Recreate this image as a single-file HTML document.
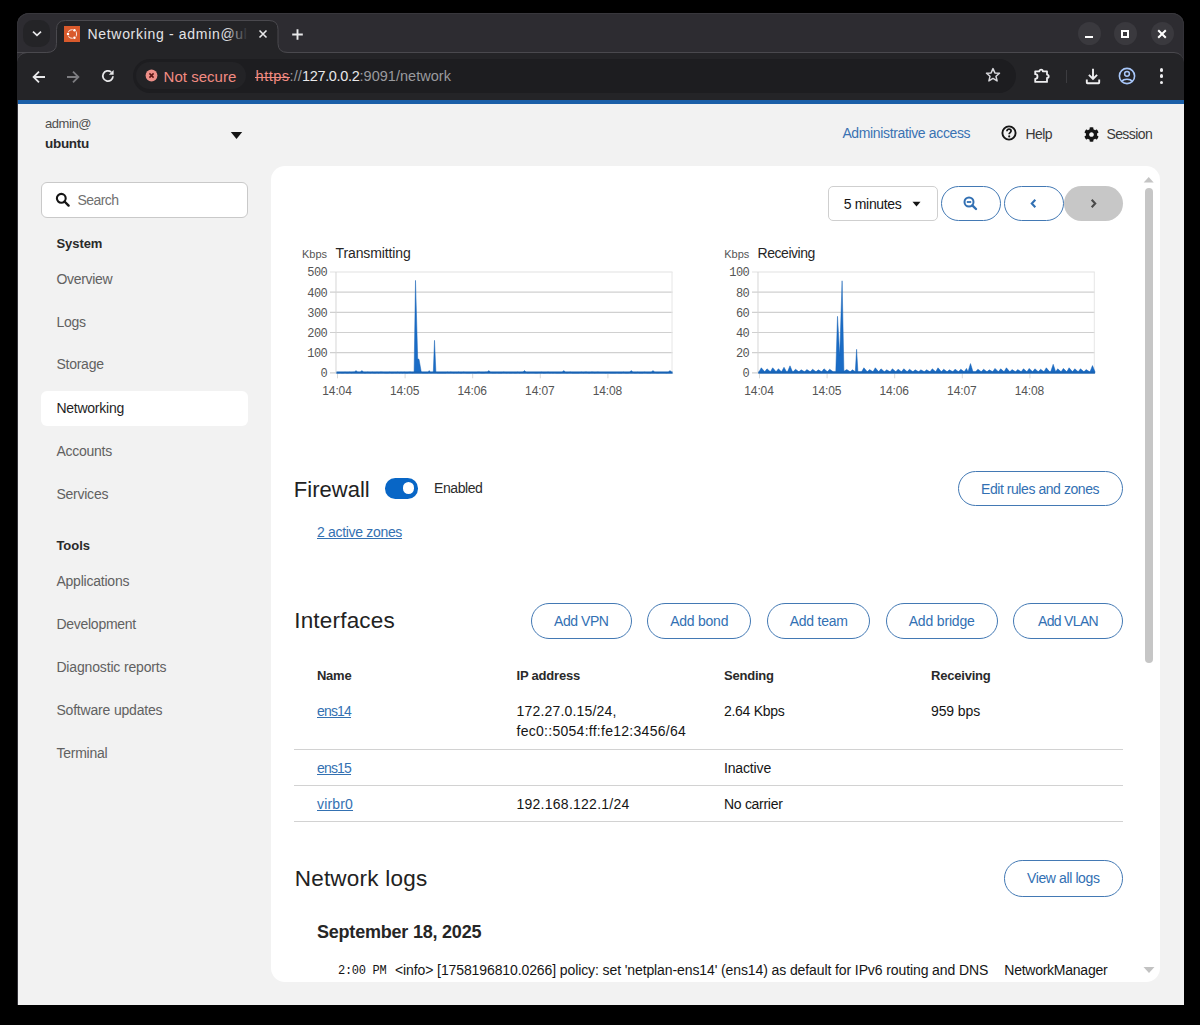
<!DOCTYPE html>
<html><head><meta charset="utf-8">
<style>
*{box-sizing:border-box;margin:0;padding:0}
html,body{width:1200px;height:1025px;overflow:hidden;background:#000;font-family:"Liberation Sans",sans-serif}
.b{position:absolute}
.t{position:absolute;white-space:nowrap;line-height:1}
</style></head><body>
<div class="b" style="left:17px;top:13px;width:1167px;height:992px;background:#2d2c31;border-radius:12px 12px 0 0;box-shadow:inset 0 1px 0 #38373c,inset 1px 0 0 #333238,inset -1px 0 0 #333238"></div>
<div class="b" style="left:17px;top:52px;width:1167px;height:48px;background:#242427;border-top:1px solid #4a494e;border-radius:10px 10px 0 0"></div>
<svg class="b" style="left:17px;top:13px" width="300" height="44" viewBox="0 0 300 44"><path d="M29.5 39.5 Q39.5 39.5 39.5 30.5 L39.5 16.5 Q39.5 7.5 48.5 7.5 L252 7.5 Q261 7.5 261 16.5 L261 30.5 Q261 39.5 271 39.5 L271 44 L29.5 44Z" fill="#242427"/><path d="M0 39.5 L29.5 39.5 Q39.5 39.5 39.5 30.5 L39.5 16.5 Q39.5 7.5 48.5 7.5 L252 7.5 Q261 7.5 261 16.5 L261 30.5 Q261 39.5 271 39.5 L300 39.5" fill="none" stroke="#4a494e" stroke-width="1"/></svg>
<div class="b" style="left:23px;top:20px;width:27px;height:27px;background:#242427;border-radius:10px"></div>
<svg class="b" style="left:31px;top:29px" width="12" height="9" viewBox="0 0 12 9"><path d="M2 2.6 L6 6.4 L10 2.6" fill="none" stroke="#e8e8ea" stroke-width="1.7"/></svg>
<svg class="b" style="left:64px;top:26px" width="16" height="16" viewBox="0 0 16 16"><rect width="16" height="16" fill="#d95a2c"/><circle cx="8.3" cy="8" r="4.3" fill="none" stroke="#f6e3dc" stroke-width="1.05"/><circle cx="4" cy="8" r="1.9" fill="#d95a2c"/><circle cx="10.45" cy="4.3" r="1.9" fill="#d95a2c"/><circle cx="10.45" cy="11.7" r="1.9" fill="#d95a2c"/><circle cx="4" cy="8" r="1.25" fill="#fff"/><circle cx="10.45" cy="4.3" r="1.25" fill="#fff"/><circle cx="10.45" cy="11.7" r="1.25" fill="#fff"/></svg>
<div class="t" style="left:87.50px;top:27.15px;font-size:14px;color:#e3e3e6;font-family:'Liberation Sans',sans-serif;letter-spacing:0.683px;">Networking - admin@ul</div>
<div class="b" style="left:226px;top:24px;width:26px;height:22px;background:linear-gradient(90deg,rgba(36,36,39,0),#242427 85%)"></div>
<svg class="b" style="left:258px;top:29px" width="10" height="10" viewBox="0 0 10 10"><path d="M1.5 1.5L8.5 8.5M8.5 1.5L1.5 8.5" stroke="#e8e8ea" stroke-width="1.6"/></svg>
<svg class="b" style="left:291px;top:28px" width="13" height="13" viewBox="0 0 13 13"><path d="M6.5 1.2V11.8M1.2 6.5H11.8" stroke="#e8e8ea" stroke-width="1.9"/></svg>
<div class="b" style="left:1078.0px;top:22px;width:23px;height:23px;border-radius:50%;background:#3a393e"></div>
<div class="b" style="left:1114.0px;top:22px;width:23px;height:23px;border-radius:50%;background:#3a393e"></div>
<div class="b" style="left:1150.5px;top:22px;width:23px;height:23px;border-radius:50%;background:#3a393e"></div>
<div class="b" style="left:1085px;top:36px;width:8px;height:2.3px;background:#fff"></div>
<div class="b" style="left:1121px;top:30.3px;width:8px;height:8px;border:2px solid #fff"></div>
<svg class="b" style="left:1157px;top:29px" width="10" height="10" viewBox="0 0 10 10"><path d="M1.2 1.2L8.8 8.8M8.8 1.2L1.2 8.8" stroke="#fff" stroke-width="2"/></svg>
<svg class="b" style="left:31px;top:69px" width="16" height="16" viewBox="0 0 16 16"><path d="M14 8H3M8 2.6L2.6 8L8 13.4" fill="none" stroke="#e8e8ea" stroke-width="1.8"/></svg>
<svg class="b" style="left:65px;top:69px" width="16" height="16" viewBox="0 0 16 16"><path d="M2 8H13M8 2.6L13.4 8L8 13.4" fill="none" stroke="#7c7c80" stroke-width="1.8"/></svg>
<svg class="b" style="left:100px;top:68px" width="16" height="16" viewBox="0 0 16 16"><path d="M13 8.3A5.1 5.1 0 1 1 11.2 4.1" fill="none" stroke="#e8e8ea" stroke-width="1.8"/><path d="M13.6 2V6.8H8.8Z" fill="#e8e8ea"/></svg>
<div class="b" style="left:133px;top:59px;width:883px;height:34px;background:#1d1d20;border-radius:17px"></div>
<div class="b" style="left:136px;top:62px;width:110px;height:27px;background:#232326;border-radius:14px"></div>
<svg class="b" style="left:144.6px;top:68.9px" width="13" height="13" viewBox="0 0 13 13"><circle cx="6.5" cy="6.5" r="5.9" fill="#ee8f88"/><path d="M4.4 4.4L8.6 8.6M8.6 4.4L4.4 8.6" stroke="#5a1614" stroke-width="1.5"/></svg>
<div class="t" style="left:163.60px;top:68.80px;font-size:15px;color:#f28b82;font-family:'Liberation Sans',sans-serif;letter-spacing:0.025px;">Not secure</div>
<div class="t" style="left:255.60px;top:68.73px;font-size:14.5px;color:#f28b82;font-family:'Liberation Sans',sans-serif;letter-spacing:0.512px;">https</div>
<div class="b" style="left:255px;top:76.6px;width:35px;height:1.3000000000000114px;background:#f28b82"></div>
<div class="t" style="left:289.60px;top:68.73px;font-size:14.5px;color:#9a9a9e;font-family:'Liberation Sans',sans-serif;letter-spacing:0.102px;">://</div>
<div class="t" style="left:302.00px;top:68.73px;font-size:14.5px;color:#e8e8ea;font-family:'Liberation Sans',sans-serif;letter-spacing:-0.341px;">127.0.0.2</div>
<div class="t" style="left:359.50px;top:68.73px;font-size:14.5px;color:#9a9a9e;font-family:'Liberation Sans',sans-serif;letter-spacing:0.032px;">:9091/network</div>
<svg class="b" style="left:985px;top:67px" width="16" height="16" viewBox="0 0 16 16"><path d="M8 1.6L9.9 5.9L14.5 6.3L11 9.3L12.1 13.9L8 11.4L3.9 13.9L5 9.3L1.5 6.3L6.1 5.9Z" fill="none" stroke="#d8d8dc" stroke-width="1.5" stroke-linejoin="round"/></svg>
<svg class="b" style="left:1033px;top:67px" width="18" height="18" viewBox="0 0 18 18"><path d="M2.2 4.3H6.4A1.7 1.7 0 0 1 9.8 4.3H14V7.6A1.7 1.7 0 0 1 14 11V14.9H2.2V11.8A2.3 2.3 0 0 0 2.2 7.2Z" fill="none" stroke="#eeeef0" stroke-width="1.8" stroke-linejoin="round"/></svg>
<div class="b" style="left:1066px;top:70px;width:1px;height:13px;background:#3c3c40"></div>
<svg class="b" style="left:1084px;top:67px" width="18" height="18" viewBox="0 0 18 18"><path d="M9 1.8V12M4.9 7.9L9 12L13.1 7.9M2.8 12.6V15.6Q2.8 16.2 3.4 16.2H14.6Q15.2 16.2 15.2 15.6V12.6" fill="none" stroke="#eeeef0" stroke-width="1.9"/></svg>
<svg class="b" style="left:1118px;top:67px" width="18" height="18" viewBox="0 0 18 18"><circle cx="9" cy="9" r="7.6" fill="none" stroke="#a8c7fa" stroke-width="1.6"/><circle cx="9" cy="6.8" r="2.4" fill="none" stroke="#a8c7fa" stroke-width="1.5"/><path d="M4.2 14.2C5.5 11.6 12.5 11.6 13.8 14.2" fill="none" stroke="#a8c7fa" stroke-width="1.5"/></svg>
<div class="b" style="left:1159.7px;top:68.0px;width:3.6px;height:3.6px;border-radius:50%;background:#eeeef0"></div>
<div class="b" style="left:1159.7px;top:74.4px;width:3.6px;height:3.6px;border-radius:50%;background:#eeeef0"></div>
<div class="b" style="left:1159.7px;top:80.60000000000001px;width:3.6px;height:3.6px;border-radius:50%;background:#eeeef0"></div>
<div class="b" style="left:18px;top:100px;width:1166px;height:4px;background:#1b5fa8"></div>
<div class="b" style="left:18px;top:104px;width:1166px;height:901px;background:#f2f2f2"></div>
<div class="t" style="left:45.00px;top:117.00px;font-size:13px;color:#4f4f4f;font-family:'Liberation Sans',sans-serif;letter-spacing:-0.438px;">admin@</div>
<div class="t" style="left:45.00px;top:136.57px;font-size:13.5px;color:#2a2a2a;font-family:'Liberation Sans',sans-serif;font-weight:bold;letter-spacing:-0.292px;">ubuntu</div>
<svg class="b" style="left:230px;top:131px" width="13" height="9" viewBox="0 0 13 9"><path d="M0.8 1H12.2L6.5 8Z" fill="#151515"/></svg>
<div class="b" style="left:41px;top:182px;width:207px;height:36px;background:#fff;border:1px solid #c9c9c9;border-radius:6px"></div>
<svg class="b" style="left:55px;top:192px" width="16" height="16" viewBox="0 0 16 16"><circle cx="6.3" cy="6.3" r="4.4" fill="none" stroke="#151515" stroke-width="2.1"/><path d="M9.5 9.5L13.6 13.6" stroke="#151515" stroke-width="2.4" stroke-linecap="round"/></svg>
<div class="t" style="left:77.40px;top:192.55px;font-size:14px;color:#707070;font-family:'Liberation Sans',sans-serif;letter-spacing:-0.557px;">Search</div>
<div class="t" style="left:56.40px;top:237.40px;font-size:13px;color:#2a2a2a;font-family:'Liberation Sans',sans-serif;font-weight:bold;letter-spacing:-0.044px;">System</div>
<div class="b" style="left:41px;top:391px;width:207px;height:35px;background:#fff;border-radius:6px"></div>
<div class="t" style="left:56.40px;top:271.85px;font-size:14px;color:#616161;font-family:'Liberation Sans',sans-serif;letter-spacing:-0.291px;">Overview</div>
<div class="t" style="left:56.40px;top:314.55px;font-size:14px;color:#616161;font-family:'Liberation Sans',sans-serif;letter-spacing:-0.266px;">Logs</div>
<div class="t" style="left:56.40px;top:357.45px;font-size:14px;color:#616161;font-family:'Liberation Sans',sans-serif;letter-spacing:-0.245px;">Storage</div>
<div class="t" style="left:56.40px;top:401.15px;font-size:14px;color:#1f1f1f;font-family:'Liberation Sans',sans-serif;letter-spacing:-0.245px;">Networking</div>
<div class="t" style="left:56.40px;top:444.15px;font-size:14px;color:#616161;font-family:'Liberation Sans',sans-serif;letter-spacing:-0.252px;">Accounts</div>
<div class="t" style="left:56.40px;top:487.15px;font-size:14px;color:#616161;font-family:'Liberation Sans',sans-serif;letter-spacing:-0.235px;">Services</div>
<div class="t" style="left:56.40px;top:574.15px;font-size:14px;color:#616161;font-family:'Liberation Sans',sans-serif;letter-spacing:-0.220px;">Applications</div>
<div class="t" style="left:56.40px;top:617.15px;font-size:14px;color:#616161;font-family:'Liberation Sans',sans-serif;letter-spacing:-0.262px;">Development</div>
<div class="t" style="left:56.40px;top:660.15px;font-size:14px;color:#616161;font-family:'Liberation Sans',sans-serif;letter-spacing:-0.155px;">Diagnostic reports</div>
<div class="t" style="left:56.40px;top:703.15px;font-size:14px;color:#616161;font-family:'Liberation Sans',sans-serif;letter-spacing:-0.183px;">Software updates</div>
<div class="t" style="left:56.40px;top:746.15px;font-size:14px;color:#616161;font-family:'Liberation Sans',sans-serif;letter-spacing:-0.231px;">Terminal</div>
<div class="t" style="left:56.40px;top:539.00px;font-size:13px;color:#2a2a2a;font-family:'Liberation Sans',sans-serif;font-weight:bold;letter-spacing:-0.037px;">Tools</div>
<div class="t" style="left:842.40px;top:126.15px;font-size:14px;color:#3a72b2;font-family:'Liberation Sans',sans-serif;letter-spacing:-0.359px;">Administrative access</div>
<svg class="b" style="left:1001px;top:124.5px" width="16" height="16" viewBox="0 0 16 16"><circle cx="8" cy="8" r="6.6" fill="none" stroke="#151515" stroke-width="1.9"/><path d="M5.9 6.3C5.9 4.9 6.9 4.2 8 4.2C9.2 4.2 10.1 5 10.1 6.1C10.1 7.4 8.6 7.6 8.3 8.6V9.2" fill="none" stroke="#151515" stroke-width="1.7"/><circle cx="8.2" cy="11.4" r="1.05" fill="#151515"/></svg>
<div class="t" style="left:1025.40px;top:126.75px;font-size:14px;color:#3a3a3a;font-family:'Liberation Sans',sans-serif;letter-spacing:-0.545px;">Help</div>
<svg class="b" style="left:1083.5px;top:126.5px" width="15" height="15" viewBox="0 0 512 512"><path fill="#151515" d="M487.4 315.7l-42.6-24.6c4.3-23.2 4.3-47 0-70.2l42.6-24.6c4.9-2.8 7.1-8.6 5.5-14-11.1-35.6-30-67.8-54.7-94.6-3.8-4.1-10-5.1-14.8-2.3L380.8 110c-17.9-15.4-38.5-27.3-60.8-35.1V25.8c0-5.6-3.9-10.5-9.4-11.7-36.7-8.2-74.3-7.8-109.2 0-5.5 1.2-9.4 6.1-9.4 11.7V75c-22.2 7.9-42.8 19.8-60.8 35.1L88.7 85.5c-4.9-2.8-11-1.9-14.8 2.3-24.7 26.7-43.6 58.9-54.7 94.6-1.7 5.4.6 11.2 5.5 14L67.3 221c-4.3 23.2-4.3 47 0 70.2l-42.6 24.6c-4.9 2.8-7.1 8.6-5.5 14 11.1 35.6 30 67.8 54.7 94.6 3.8 4.1 10 5.1 14.8 2.3l42.6-24.6c17.9 15.4 38.5 27.3 60.8 35.1v49.2c0 5.6 3.9 10.5 9.4 11.7 36.7 8.2 74.3 7.8 109.2 0 5.5-1.2 9.4-6.1 9.4-11.7v-49.2c22.2-7.9 42.8-19.8 60.8-35.1l42.6 24.6c4.9 2.8 11 1.9 14.8-2.3 24.7-26.7 43.6-58.9 54.7-94.6 1.5-5.5-.7-11.3-5.6-14.1zM256 336c-44.1 0-80-35.9-80-80s35.9-80 80-80 80 35.9 80 80-35.9 80-80 80z"/></svg>
<div class="t" style="left:1106.40px;top:126.75px;font-size:14px;color:#3a3a3a;font-family:'Liberation Sans',sans-serif;letter-spacing:-0.571px;">Session</div>
<div class="b" style="left:271px;top:166px;width:889px;height:816px;background:#fff;border-radius:14px"></div>
<div class="b" style="left:828px;top:186px;width:110px;height:35px;border:1px solid #cfcfcf;border-radius:5px;background:#fff"></div>
<div class="t" style="left:843.80px;top:196.55px;font-size:14px;color:#151515;font-family:'Liberation Sans',sans-serif;letter-spacing:-0.341px;">5 minutes</div>
<svg class="b" style="left:912px;top:201px" width="9" height="6" viewBox="0 0 9 6"><path d="M0.5 0.8H8.5L4.5 5.5Z" fill="#151515"/></svg>
<div class="b" style="left:941px;top:186px;width:60px;height:35px;border:1px solid #4379b4;border-radius:17.5px;background:#fff"></div>
<svg class="b" style="left:963px;top:196px" width="15" height="15" viewBox="0 0 15 15"><circle cx="6" cy="6" r="4.5" fill="none" stroke="#3270b3" stroke-width="2"/><path d="M3.8 6H8.2" stroke="#3270b3" stroke-width="1.8"/><path d="M9.3 9.3L13 13" stroke="#3270b3" stroke-width="2.4" stroke-linecap="round"/></svg>
<div class="b" style="left:1004px;top:186px;width:60px;height:35px;border:1px solid #4379b4;border-radius:17.5px;background:#fff"></div>
<svg class="b" style="left:1029px;top:198px" width="9" height="11" viewBox="0 0 9 11"><path d="M6.3 1.8L2.8 5.5L6.3 9.2" fill="none" stroke="#3270b3" stroke-width="2.1"/></svg>
<div class="b" style="left:1064px;top:186px;width:59px;height:35px;background:#c7c7c7;border-radius:17.5px"></div>
<svg class="b" style="left:1089px;top:198px" width="9" height="11" viewBox="0 0 9 11"><path d="M2.7 1.8L6.2 5.5L2.7 9.2" fill="none" stroke="#4a4a4a" stroke-width="2.1"/></svg>
<div class="t" style="left:302.00px;top:248.69px;font-size:11px;color:#555555;font-family:'Liberation Sans',sans-serif;letter-spacing:-0.023px;">Kbps</div>
<div class="t" style="left:335.60px;top:246.45px;font-size:14px;color:#262626;font-family:'Liberation Sans',sans-serif;letter-spacing:-0.122px;">Transmitting</div>
<svg class="b" style="left:295.5px;top:266.5px" width="386.5" height="140.8" viewBox="295.5 266.5 386.5 140.8"><line x1="329.5" y1="271.5" x2="672" y2="271.5" stroke="#e2e2e2" stroke-width="1.2"/><line x1="329.5" y1="291.7" x2="672" y2="291.7" stroke="#d0d0d0" stroke-width="1.2"/><line x1="329.5" y1="311.8" x2="672" y2="311.8" stroke="#d0d0d0" stroke-width="1.2"/><line x1="329.5" y1="332.0" x2="672" y2="332.0" stroke="#d0d0d0" stroke-width="1.2"/><line x1="329.5" y1="352.1" x2="672" y2="352.1" stroke="#d0d0d0" stroke-width="1.2"/><line x1="329.5" y1="372.3" x2="672" y2="372.3" stroke="#d0d0d0" stroke-width="1.2"/><line x1="335.5" y1="271.5" x2="335.5" y2="372.3" stroke="#d6d6d6" stroke-width="1"/><line x1="671.5" y1="271.5" x2="671.5" y2="372.3" stroke="#e6e6e6" stroke-width="1"/><line x1="337.0" y1="372.3" x2="337.0" y2="377.8" stroke="#d8d8d8" stroke-width="1"/><line x1="404.6" y1="372.3" x2="404.6" y2="377.8" stroke="#d8d8d8" stroke-width="1"/><line x1="472.2" y1="372.3" x2="472.2" y2="377.8" stroke="#d8d8d8" stroke-width="1"/><line x1="539.8" y1="372.3" x2="539.8" y2="377.8" stroke="#d8d8d8" stroke-width="1"/><line x1="607.4" y1="372.3" x2="607.4" y2="377.8" stroke="#d8d8d8" stroke-width="1"/><polygon points="336.0,372.8 336.5,372.3 338.1,372.3 339.7,372.0 341.3,372.3 342.9,372.3 344.5,371.7 346.1,372.3 347.7,372.3 349.3,371.7 350.9,372.3 352.5,371.7 354.0,371.8 355.5,370.0 357.0,371.8 358.9,372.0 359.9,371.8 361.4,370.0 362.9,371.8 363.7,372.3 365.3,372.3 366.9,371.7 368.5,372.0 370.1,372.3 371.7,371.7 373.3,372.3 374.9,372.3 376.5,371.7 378.1,372.3 379.7,371.7 381.3,371.7 382.9,372.0 384.5,372.3 386.1,372.3 387.7,372.3 389.3,371.7 390.9,372.3 392.5,372.3 394.1,372.0 395.7,372.3 397.3,371.7 398.9,372.3 400.5,371.7 402.1,372.3 403.7,371.7 405.3,372.3 406.9,372.3 408.5,371.7 410.1,371.7 411.7,372.3 413.6,371.8 415.0,279.9 417.2,358.3 418.5,358.8 420.8,371.8 422.0,372.3 427.5,372.3 428.7,370.1 430.0,372.3 432.8,371.8 434.0,339.8 435.4,371.8 437.0,372.3 437.3,372.3 438.9,372.3 440.5,372.3 442.1,372.3 443.7,372.3 445.3,372.3 446.9,371.7 448.5,372.3 450.1,371.7 451.7,372.0 453.3,372.3 454.9,372.0 456.5,372.3 458.1,371.7 459.7,372.3 461.3,372.3 462.9,371.7 464.5,372.0 466.1,372.3 467.7,372.3 469.3,372.3 470.9,372.0 472.5,372.0 474.1,372.3 475.7,372.3 477.3,371.7 478.9,371.7 480.5,372.3 482.1,372.3 483.7,372.3 485.3,371.7 486.8,371.8 488.3,370.0 489.8,371.8 491.7,372.3 493.3,372.3 494.9,372.3 496.5,372.0 498.1,372.3 499.7,372.3 501.3,372.3 502.9,371.7 504.5,372.0 506.1,372.3 507.7,372.0 509.3,372.3 510.9,372.3 512.5,372.0 514.1,372.3 515.7,372.3 517.3,371.7 518.9,372.3 520.5,372.0 522.5,371.8 524.0,370.0 525.5,371.8 526.9,372.3 528.5,372.3 530.1,372.0 531.7,372.0 533.3,372.0 534.9,372.3 536.5,372.3 538.1,372.0 539.7,372.0 541.3,371.7 542.9,372.3 544.5,372.3 546.1,372.0 547.7,371.7 549.3,372.3 550.9,372.0 552.5,372.3 554.1,372.0 555.7,372.3 557.3,372.3 558.9,372.3 560.5,372.3 561.8,371.8 563.3,370.0 564.8,371.8 565.3,372.3 566.9,372.3 568.5,372.0 570.1,371.7 571.7,372.3 573.3,372.3 574.9,372.3 576.5,372.3 578.1,372.3 579.7,372.0 581.3,371.7 582.9,372.3 584.5,371.7 586.1,371.7 587.7,372.3 589.3,372.3 590.9,371.7 592.5,371.7 594.1,372.3 595.7,372.0 597.3,371.7 598.9,372.0 600.5,372.0 602.1,372.0 603.7,372.0 605.3,372.3 606.9,372.0 608.5,372.0 610.1,372.3 611.7,372.3 613.3,372.3 614.9,372.3 616.5,372.0 618.1,372.3 619.7,372.3 621.3,372.3 622.9,371.7 624.5,372.3 626.1,372.3 627.7,372.3 629.3,371.8 630.8,370.0 632.3,371.8 634.1,372.3 635.7,372.3 637.3,371.7 638.9,372.3 640.5,372.3 642.1,372.3 643.7,371.7 645.3,372.0 646.9,372.3 648.5,372.3 650.1,372.3 651.0,371.8 652.5,370.0 654.0,371.8 654.9,372.0 656.5,372.3 658.1,372.3 659.7,372.0 661.3,372.0 662.9,372.0 664.5,372.0 666.1,372.3 668.0,371.8 669.5,370.0 671.0,371.8 672,372.8" fill="#1a6cc6" stroke="#1762b4" stroke-width="0.5"/><line x1="336.0" y1="371.8" x2="672" y2="371.8" stroke="#1762b4" stroke-width="1.7"/></svg>
<div class="t" style="left:307.25px;top:267.40px;font-size:12px;color:#555555;font-family:'Liberation Mono',monospace;letter-spacing:-0.553px;">500</div>
<div class="t" style="left:307.25px;top:287.56px;font-size:12px;color:#555555;font-family:'Liberation Mono',monospace;letter-spacing:-0.553px;">400</div>
<div class="t" style="left:307.25px;top:307.72px;font-size:12px;color:#555555;font-family:'Liberation Mono',monospace;letter-spacing:-0.553px;">300</div>
<div class="t" style="left:307.25px;top:327.88px;font-size:12px;color:#555555;font-family:'Liberation Mono',monospace;letter-spacing:-0.553px;">200</div>
<div class="t" style="left:307.25px;top:348.04px;font-size:12px;color:#555555;font-family:'Liberation Mono',monospace;letter-spacing:-0.553px;">100</div>
<div class="t" style="left:320.55px;top:368.20px;font-size:12px;color:#555555;font-family:'Liberation Mono',monospace;letter-spacing:-0.553px;">0</div>
<div class="t" style="left:322.30px;top:384.54px;font-size:12px;color:#555555;font-family:'Liberation Sans',sans-serif;letter-spacing:-0.123px;">14:04</div>
<div class="t" style="left:389.90px;top:384.54px;font-size:12px;color:#555555;font-family:'Liberation Sans',sans-serif;letter-spacing:-0.123px;">14:05</div>
<div class="t" style="left:457.50px;top:384.54px;font-size:12px;color:#555555;font-family:'Liberation Sans',sans-serif;letter-spacing:-0.123px;">14:06</div>
<div class="t" style="left:525.10px;top:384.54px;font-size:12px;color:#555555;font-family:'Liberation Sans',sans-serif;letter-spacing:-0.123px;">14:07</div>
<div class="t" style="left:592.70px;top:384.54px;font-size:12px;color:#555555;font-family:'Liberation Sans',sans-serif;letter-spacing:-0.123px;">14:08</div>
<div class="t" style="left:724.30px;top:248.69px;font-size:11px;color:#555555;font-family:'Liberation Sans',sans-serif;letter-spacing:-0.023px;">Kbps</div>
<div class="t" style="left:757.60px;top:246.45px;font-size:14px;color:#262626;font-family:'Liberation Sans',sans-serif;letter-spacing:-0.473px;">Receiving</div>
<svg class="b" style="left:717.5px;top:266.5px" width="386.79999999999995" height="140.8" viewBox="717.5 266.5 386.79999999999995 140.8"><line x1="751.5" y1="271.5" x2="1094.3" y2="271.5" stroke="#e2e2e2" stroke-width="1.2"/><line x1="751.5" y1="291.7" x2="1094.3" y2="291.7" stroke="#d0d0d0" stroke-width="1.2"/><line x1="751.5" y1="311.8" x2="1094.3" y2="311.8" stroke="#d0d0d0" stroke-width="1.2"/><line x1="751.5" y1="332.0" x2="1094.3" y2="332.0" stroke="#d0d0d0" stroke-width="1.2"/><line x1="751.5" y1="352.1" x2="1094.3" y2="352.1" stroke="#d0d0d0" stroke-width="1.2"/><line x1="751.5" y1="372.3" x2="1094.3" y2="372.3" stroke="#d0d0d0" stroke-width="1.2"/><line x1="757.5" y1="271.5" x2="757.5" y2="372.3" stroke="#d6d6d6" stroke-width="1"/><line x1="1093.8" y1="271.5" x2="1093.8" y2="372.3" stroke="#e6e6e6" stroke-width="1"/><line x1="759.0" y1="372.3" x2="759.0" y2="377.8" stroke="#d8d8d8" stroke-width="1"/><line x1="826.6" y1="372.3" x2="826.6" y2="377.8" stroke="#d8d8d8" stroke-width="1"/><line x1="894.2" y1="372.3" x2="894.2" y2="377.8" stroke="#d8d8d8" stroke-width="1"/><line x1="961.8" y1="372.3" x2="961.8" y2="377.8" stroke="#d8d8d8" stroke-width="1"/><line x1="1029.4" y1="372.3" x2="1029.4" y2="377.8" stroke="#d8d8d8" stroke-width="1"/><polygon points="758.0,372.8 758.5,371.3 760.8,367.3 764.2,371.3 766.5,368.3 769.9,371.3 772.2,367.3 775.6,371.3 777.9,368.3 781.0,371.3 783.5,366.8 786.0,371.3 787.0,371.3 789.5,365.3 792.0,371.3 792.7,371.3 795.0,368.7 798.4,371.3 800.7,369.3 804.1,371.3 806.4,369.1 809.8,371.3 812.1,368.7 815.5,371.3 817.8,369.3 821.2,371.3 823.5,368.3 826.9,371.3 829.2,368.7 832.6,371.3 835.3,371.3 837.0,315.8 839.2,355.3 841.6,280.3 843.4,370.8 846.3,369.1 849.7,371.3 852.0,369.3 854.8,371.3 856.1,348.8 857.4,371.3 861.1,371.3 863.4,367.3 866.8,371.3 869.1,369.1 872.5,371.3 874.8,367.3 878.2,371.3 880.5,368.3 883.9,371.3 886.2,369.3 889.6,371.3 891.9,368.3 895.3,371.3 897.6,368.7 901.0,371.3 903.3,368.3 906.7,371.3 909.0,368.7 912.4,371.3 914.7,369.3 918.1,371.3 920.4,369.3 923.8,371.3 926.1,369.3 929.5,371.3 931.8,368.3 935.2,371.3 937.5,367.3 940.9,371.3 943.2,368.7 946.6,371.3 948.9,369.3 952.3,371.3 954.6,368.7 958.0,371.3 960.3,368.7 963.7,371.3 966.0,367.9 967.5,371.3 970.0,363.1 972.5,371.3 975.1,371.3 977.4,368.7 980.8,371.3 983.1,368.7 986.5,371.3 988.8,369.3 992.2,371.3 994.5,367.9 997.9,371.3 1000.2,368.3 1003.6,371.3 1005.9,367.3 1009.3,371.3 1011.6,369.1 1015.0,371.3 1017.3,369.1 1020.7,371.3 1023.0,368.3 1026.4,371.3 1028.7,367.9 1032.1,371.3 1034.4,368.3 1037.8,371.3 1040.1,368.7 1043.5,371.3 1045.8,367.3 1049.2,371.3 1050.2,371.3 1052.7,363.8 1055.2,371.3 1057.2,368.3 1060.6,371.3 1062.9,367.9 1066.3,371.3 1068.6,367.3 1072.0,371.3 1074.3,368.3 1077.7,371.3 1080.0,368.3 1083.4,371.3 1085.7,369.1 1089.1,371.3 1089.5,371.3 1092.0,365.1 1094.5,371.3 1094.3,372.8" fill="#1a6cc6" stroke="#1762b4" stroke-width="0.5"/><line x1="758.0" y1="371.8" x2="1094.3" y2="371.8" stroke="#1762b4" stroke-width="1.7"/></svg>
<div class="t" style="left:729.25px;top:267.40px;font-size:12px;color:#555555;font-family:'Liberation Mono',monospace;letter-spacing:-0.553px;">100</div>
<div class="t" style="left:735.90px;top:287.56px;font-size:12px;color:#555555;font-family:'Liberation Mono',monospace;letter-spacing:-0.553px;">80</div>
<div class="t" style="left:735.90px;top:307.72px;font-size:12px;color:#555555;font-family:'Liberation Mono',monospace;letter-spacing:-0.553px;">60</div>
<div class="t" style="left:735.90px;top:327.88px;font-size:12px;color:#555555;font-family:'Liberation Mono',monospace;letter-spacing:-0.553px;">40</div>
<div class="t" style="left:735.90px;top:348.04px;font-size:12px;color:#555555;font-family:'Liberation Mono',monospace;letter-spacing:-0.553px;">20</div>
<div class="t" style="left:742.55px;top:368.20px;font-size:12px;color:#555555;font-family:'Liberation Mono',monospace;letter-spacing:-0.553px;">0</div>
<div class="t" style="left:744.30px;top:384.54px;font-size:12px;color:#555555;font-family:'Liberation Sans',sans-serif;letter-spacing:-0.123px;">14:04</div>
<div class="t" style="left:811.90px;top:384.54px;font-size:12px;color:#555555;font-family:'Liberation Sans',sans-serif;letter-spacing:-0.123px;">14:05</div>
<div class="t" style="left:879.50px;top:384.54px;font-size:12px;color:#555555;font-family:'Liberation Sans',sans-serif;letter-spacing:-0.123px;">14:06</div>
<div class="t" style="left:947.10px;top:384.54px;font-size:12px;color:#555555;font-family:'Liberation Sans',sans-serif;letter-spacing:-0.123px;">14:07</div>
<div class="t" style="left:1014.70px;top:384.54px;font-size:12px;color:#555555;font-family:'Liberation Sans',sans-serif;letter-spacing:-0.123px;">14:08</div>
<div class="t" style="left:293.80px;top:478.68px;font-size:22px;color:#222222;font-family:'Liberation Sans',sans-serif;letter-spacing:0.025px;">Firewall</div>
<div class="b" style="left:384.8px;top:478.2px;width:33.5px;height:20.5px;background:#0866c6;border-radius:10.25px"></div>
<div class="b" style="left:402.5px;top:482.4px;width:11.800000000000011px;height:11.800000000000011px;background:#fff;border-radius:50%"></div>
<div class="t" style="left:434.00px;top:480.95px;font-size:14px;color:#2b2b2b;font-family:'Liberation Sans',sans-serif;letter-spacing:-0.423px;">Enabled</div>
<div class="t" style="left:317.00px;top:525.15px;font-size:14px;color:#3471b2;font-family:'Liberation Sans',sans-serif;letter-spacing:-0.319px;text-decoration:underline;">2 active zones</div>
<div class="b" style="left:958px;top:471px;width:165px;height:35px;border:1px solid #4379b4;border-radius:17.5px;background:#fff"></div>
<div class="t" style="left:981.00px;top:481.65px;font-size:14px;color:#3270b3;font-family:'Liberation Sans',sans-serif;letter-spacing:-0.441px;">Edit rules and zones</div>
<div class="t" style="left:294.20px;top:610.25px;font-size:22.5px;color:#222222;font-family:'Liberation Sans',sans-serif;letter-spacing:0.199px;">Interfaces</div>
<div class="b" style="left:530.5px;top:603px;width:101.5px;height:36px;border:1px solid #4379b4;border-radius:18.0px;background:#fff"></div>
<div class="t" style="left:554.00px;top:613.75px;font-size:14px;color:#3270b3;font-family:'Liberation Sans',sans-serif;letter-spacing:-0.442px;">Add VPN</div>
<div class="b" style="left:647.4px;top:603px;width:103.60000000000002px;height:36px;border:1px solid #4379b4;border-radius:18.0px;background:#fff"></div>
<div class="t" style="left:670.20px;top:613.75px;font-size:14px;color:#3270b3;font-family:'Liberation Sans',sans-serif;letter-spacing:-0.240px;">Add bond</div>
<div class="b" style="left:767px;top:603px;width:103.39999999999998px;height:36px;border:1px solid #4379b4;border-radius:18.0px;background:#fff"></div>
<div class="t" style="left:789.70px;top:613.75px;font-size:14px;color:#3270b3;font-family:'Liberation Sans',sans-serif;letter-spacing:-0.238px;">Add team</div>
<div class="b" style="left:885.7px;top:603px;width:112.0px;height:36px;border:1px solid #4379b4;border-radius:18.0px;background:#fff"></div>
<div class="t" style="left:908.70px;top:613.75px;font-size:14px;color:#3270b3;font-family:'Liberation Sans',sans-serif;letter-spacing:-0.169px;">Add bridge</div>
<div class="b" style="left:1013px;top:603px;width:110px;height:36px;border:1px solid #4379b4;border-radius:18.0px;background:#fff"></div>
<div class="t" style="left:1038.00px;top:613.75px;font-size:14px;color:#3270b3;font-family:'Liberation Sans',sans-serif;letter-spacing:-0.672px;">Add VLAN</div>
<div class="t" style="left:317.00px;top:668.80px;font-size:13px;color:#2a2a2a;font-family:'Liberation Sans',sans-serif;font-weight:bold;letter-spacing:-0.266px;">Name</div>
<div class="t" style="left:516.50px;top:668.80px;font-size:13px;color:#2a2a2a;font-family:'Liberation Sans',sans-serif;font-weight:bold;letter-spacing:-0.197px;">IP address</div>
<div class="t" style="left:724.00px;top:668.80px;font-size:13px;color:#2a2a2a;font-family:'Liberation Sans',sans-serif;font-weight:bold;letter-spacing:-0.220px;">Sending</div>
<div class="t" style="left:931.00px;top:668.80px;font-size:13px;color:#2a2a2a;font-family:'Liberation Sans',sans-serif;font-weight:bold;letter-spacing:-0.205px;">Receiving</div>
<div class="t" style="left:317.00px;top:704.35px;font-size:14px;color:#3471b2;font-family:'Liberation Sans',sans-serif;letter-spacing:-0.825px;text-decoration:underline;">ens14</div>
<div class="t" style="left:516.50px;top:704.35px;font-size:14px;color:#151515;font-family:'Liberation Sans',sans-serif;letter-spacing:0.182px;">172.27.0.15/24,</div>
<div class="t" style="left:516.50px;top:724.45px;font-size:14px;color:#151515;font-family:'Liberation Sans',sans-serif;letter-spacing:0.274px;">fec0::5054:ff:fe12:3456/64</div>
<div class="t" style="left:724.00px;top:704.35px;font-size:14px;color:#151515;font-family:'Liberation Sans',sans-serif;letter-spacing:-0.281px;">2.64 Kbps</div>
<div class="t" style="left:931.00px;top:704.35px;font-size:14px;color:#151515;font-family:'Liberation Sans',sans-serif;letter-spacing:-0.114px;">959 bps</div>
<div class="b" style="left:294px;top:749px;width:829px;height:1px;background:#d2d2d2"></div>
<div class="t" style="left:317.00px;top:761.25px;font-size:14px;color:#3471b2;font-family:'Liberation Sans',sans-serif;letter-spacing:-0.825px;text-decoration:underline;">ens15</div>
<div class="t" style="left:724.00px;top:761.25px;font-size:14px;color:#151515;font-family:'Liberation Sans',sans-serif;letter-spacing:-0.154px;">Inactive</div>
<div class="b" style="left:294px;top:785px;width:829px;height:1px;background:#d2d2d2"></div>
<div class="t" style="left:317.00px;top:797.15px;font-size:14px;color:#3471b2;font-family:'Liberation Sans',sans-serif;letter-spacing:0.169px;text-decoration:underline;">virbr0</div>
<div class="t" style="left:516.50px;top:797.15px;font-size:14px;color:#151515;font-family:'Liberation Sans',sans-serif;letter-spacing:0.254px;">192.168.122.1/24</div>
<div class="t" style="left:724.00px;top:797.15px;font-size:14px;color:#151515;font-family:'Liberation Sans',sans-serif;letter-spacing:-0.292px;">No carrier</div>
<div class="b" style="left:294px;top:821px;width:829px;height:1px;background:#d2d2d2"></div>
<div class="t" style="left:294.70px;top:867.95px;font-size:22.5px;color:#222222;font-family:'Liberation Sans',sans-serif;letter-spacing:0.220px;">Network logs</div>
<div class="b" style="left:1004.3px;top:860.4px;width:118.70000000000005px;height:36.39999999999998px;border:1px solid #4379b4;border-radius:18.19999999999999px;background:#fff"></div>
<div class="t" style="left:1027.00px;top:871.15px;font-size:14px;color:#3270b3;font-family:'Liberation Sans',sans-serif;letter-spacing:-0.388px;">View all logs</div>
<div class="t" style="left:317.00px;top:923.06px;font-size:18px;color:#262626;font-family:'Liberation Sans',sans-serif;font-weight:bold;letter-spacing:-0.213px;">September 18, 2025</div>
<div class="t" style="left:338.00px;top:964.70px;font-size:12px;color:#151515;font-family:'Liberation Mono',monospace;letter-spacing:-0.303px;">2:00 PM</div>
<div class="t" style="left:395.00px;top:962.95px;font-size:14px;color:#151515;font-family:'Liberation Sans',sans-serif;letter-spacing:-0.103px;">&lt;info&gt; [1758196810.0266] policy: set 'netplan-ens14' (ens14) as default for IPv6 routing and DNS</div>
<div class="t" style="left:1004.30px;top:962.95px;font-size:14px;color:#151515;font-family:'Liberation Sans',sans-serif;letter-spacing:-0.253px;">NetworkManager</div>
<svg class="b" style="left:1143.3px;top:175.5px" width="12" height="8" viewBox="0 0 12 8"><path d="M0.7 6.5H10.7L5.7 1Z" fill="#c4c4c4"/></svg>
<div class="b" style="left:1144.8px;top:188px;width:8.600000000000136px;height:475px;background:#c6c6c6;border-radius:4.3px"></div>
<svg class="b" style="left:1143px;top:965.5px" width="12" height="8" viewBox="0 0 12 8"><path d="M0.5 1H11.5L6 7Z" fill="#c2c2c2"/></svg>
</body></html>
